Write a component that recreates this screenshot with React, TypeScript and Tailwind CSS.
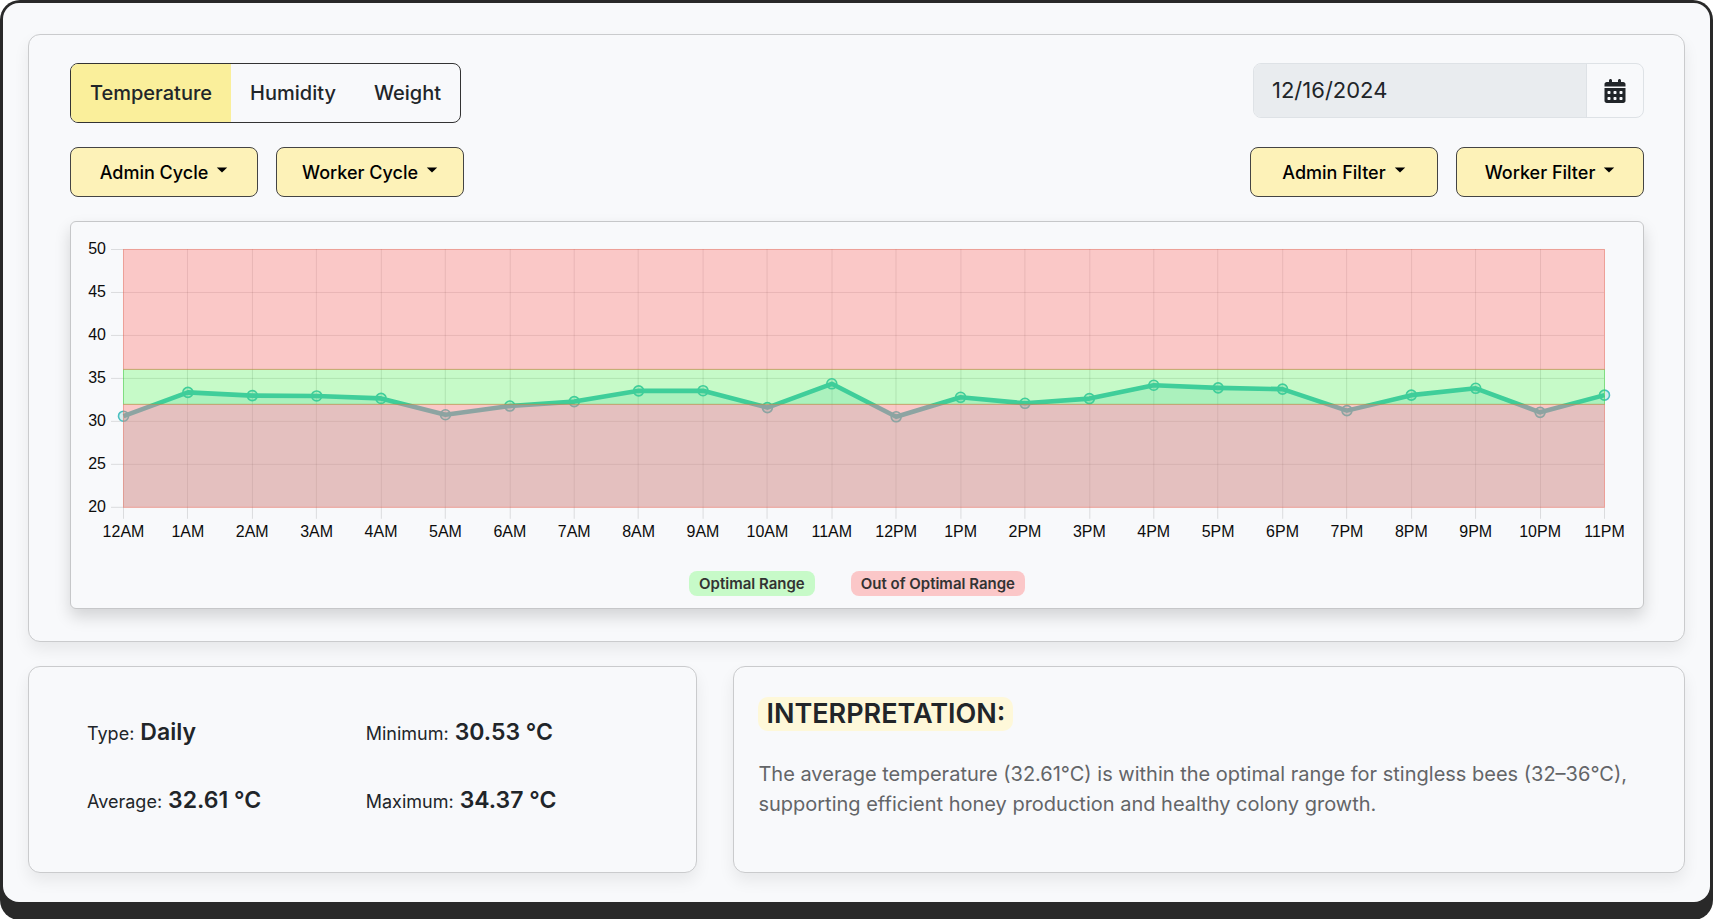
import React, { useState } from "react";
import { FaCalendarDays } from "react-icons/fa6";

const HOURS = [
  "12AM", "1AM", "2AM", "3AM", "4AM", "5AM", "6AM", "7AM", "8AM", "9AM", "10AM", "11AM",
  "12PM", "1PM", "2PM", "3PM", "4PM", "5PM", "6PM", "7PM", "8PM", "9PM", "10PM", "11PM",
];

const READINGS = [
  30.6, 33.37, 33.0, 32.96, 32.67, 30.77, 31.78, 32.3, 33.55, 33.57, 31.6, 34.37,
  30.53, 32.8, 32.1, 32.65, 34.2, 33.9, 33.75, 31.25, 33.05, 33.85, 31.05, 33.05,
];

const Y_TICKS = [50, 45, 40, 35, 30, 25, 20];

// Plot area inside the chart's own coordinate system.
const LEFT = 52;
const RIGHT = 1534;
const TOP = 27;
const BOTTOM = 285;

const xAt = (i: number) => LEFT + ((RIGHT - LEFT) * i) / (HOURS.length - 1);
const yAt = (v: number) => BOTTOM - ((v - 20) / 30) * (BOTTOM - TOP);
const crisp = (n: number) => Math.round(n) + 0.5;

function Band({ from, to, fill, stroke }: { from: number; to: number; fill: string; stroke: string }) {
  return (
    <rect
      x={LEFT + 0.5}
      y={crisp(yAt(to))}
      width={RIGHT - LEFT}
      height={crisp(yAt(from)) - crisp(yAt(to))}
      fill={fill}
      stroke={stroke}
    />
  );
}

function TemperatureChart() {
  const line = READINGS.map((v, i) => `${xAt(i) + 0.5},${yAt(v) + 0.5}`).join(" ");
  return (
    <svg
      viewBox="0 0 1573 325"
      className="block w-full"
      role="img"
      aria-label="Temperature by hour"
    >
      <g stroke="rgba(0,0,0,0.12)">
        {Y_TICKS.map((t) => (
          <line key={t} x1={LEFT - 12} x2={RIGHT} y1={crisp(yAt(t))} y2={crisp(yAt(t))} />
        ))}
        {HOURS.map((h, i) => (
          <line key={h} x1={crisp(xAt(i))} x2={crisp(xAt(i))} y1={TOP} y2={BOTTOM + 12} />
        ))}
      </g>
      <polygon
        points={`${LEFT},${BOTTOM} ${line} ${RIGHT},${BOTTOM}`}
        fill="rgba(75,192,192,0.2)"
      />
      <polyline points={line} fill="none" stroke="rgb(75,192,192)" strokeWidth="4.6" strokeLinejoin="round" />
      {READINGS.map((v, i) => (
        <circle
          key={i}
          cx={xAt(i) + 0.5}
          cy={yAt(v) + 0.5}
          r="5"
          fill="rgba(75,192,192,0.2)"
          stroke="rgb(75,192,192)"
          strokeWidth="1.6"
        />
      ))}
      <Band from={32} to={36} fill="rgba(25,255,16,0.22)" stroke="rgba(60,220,60,0.5)" />
      <Band from={20} to={32} fill="rgba(255,118,112,0.37)" stroke="rgba(255,100,80,0.4)" />
      <Band from={36} to={50} fill="rgba(255,118,112,0.37)" stroke="rgba(255,100,80,0.4)" />
      <g fill="#0c0c0c" fontFamily="'Liberation Sans', Arial, sans-serif" fontSize="16">
        {Y_TICKS.map((t) => (
          <text key={t} x={LEFT - 17} y={yAt(t) + 5} textAnchor="end">{t}</text>
        ))}
        {HOURS.map((h, i) => (
          <text key={h} x={xAt(i) + 0.5} y={BOTTOM + 30} textAnchor="middle">{h}</text>
        ))}
      </g>
    </svg>
  );
}

function MenuButton({ label }: { label: string }) {
  return (
    <button
      type="button"
      aria-haspopup="menu"
      className="flex h-[50px] w-[188px] items-center justify-center gap-2 rounded-lg border border-[#444] bg-[#fdf2b8] text-[18px] font-medium text-black"
    >
      {label}
      <svg className="mb-1" width="12" height="6" viewBox="0 0 12 6" aria-hidden="true">
        <path d="M0.8 0.5h10.4L6 5.6z" fill="currentColor" />
      </svg>
    </button>
  );
}

function Stat({ label, value }: { label: string; value: string }) {
  return (
    <div className="flex items-baseline gap-1.5">
      <dt className="text-[18px]">{label}:</dt>
      <dd className="text-[23px] font-semibold">{value}</dd>
    </div>
  );
}

const CARD = "rounded-xl border border-[#cacbcd] bg-[#f8f9fb] shadow-[0_8px_16px_rgba(0,0,0,0.07)]";

export default function App() {
  const [metric, setMetric] = useState("Temperature");
  return (
    <div className="min-h-screen bg-white font-['Inter',sans-serif] text-[#212529]">
      <main className="min-h-screen rounded-[20px] bg-[#292929] px-[3px] pt-[3px] pb-[18px]">
        <div className="flex flex-col gap-6 rounded-2xl bg-[#f8f9fb] px-[25px] pt-[31px] pb-[29px]">
          <section className={`${CARD} pt-7 pr-10 pb-8 pl-[41px]`}>
            <div className="flex items-start justify-between">
              <div
                role="group"
                aria-label="Metric"
                className="flex h-[60px] overflow-hidden rounded-lg border border-[#333]"
              >
                {["Temperature", "Humidity", "Weight"].map((m) => (
                  <button
                    key={m}
                    type="button"
                    aria-pressed={metric === m}
                    onClick={() => setMetric(m)}
                    className={`px-[19px] text-[20px] font-medium ${metric === m ? "bg-[#faef9b]" : ""}`}
                  >
                    {m}
                  </button>
                ))}
              </div>
              <div className="flex h-[55px] w-[391px] overflow-hidden rounded-lg border border-[#dee2e6]">
                <input
                  type="text"
                  readOnly
                  aria-label="Date"
                  defaultValue="12/16/2024"
                  className="min-w-0 flex-1 border-r border-[#dee2e6] bg-[#e9ecef] px-[18px] text-[22px] outline-none"
                />
                <button type="button" aria-label="Open calendar" className="flex w-14 items-center justify-center">
                  <FaCalendarDays size={24} />
                </button>
              </div>
            </div>

            <div className="mt-6 flex justify-between">
              <div className="flex gap-[18px]">
                <MenuButton label="Admin Cycle" />
                <MenuButton label="Worker Cycle" />
              </div>
              <div className="flex gap-[18px]">
                <MenuButton label="Admin Filter" />
                <MenuButton label="Worker Filter" />
              </div>
            </div>

            <div className="mt-6 rounded-md border border-[#c6c7c9] bg-[#f8f9fb] pb-3 shadow-[0_8px_16px_rgba(0,0,0,0.15)]">
              <TemperatureChart />
              <ul className="mt-6 flex justify-center gap-9 text-[15px] leading-[25px] font-semibold text-[#333]">
                <li className="rounded-lg bg-[#c7fac8] px-2.5">Optimal Range</li>
                <li className="rounded-lg bg-[#fbc7c8] px-2.5">Out of Optimal Range</li>
              </ul>
            </div>
          </section>

          <div className="grid grid-cols-12 gap-9">
            <section className={`${CARD} col-span-5 pt-[47px] pr-[52px] pb-[52px] pl-[58px]`}>
              <dl className="grid grid-cols-2 gap-y-[30px] leading-9">
                <Stat label="Type" value="Daily" />
                <Stat label="Minimum" value="30.53 °C" />
                <Stat label="Average" value="32.61 °C" />
                <Stat label="Maximum" value="34.37 °C" />
              </dl>
            </section>
            <section className={`${CARD} col-span-7 px-6 pt-[30px]`}>
              <h2 className="w-fit rounded-[10px] bg-[#fef8d9] px-2 text-[27px] leading-[34px] font-semibold">
                INTERPRETATION:
              </h2>
              <p className="mt-7 text-[20px] leading-[30px] text-[#636568]">
                The average temperature (32.61°C) is within the optimal range for stingless bees (32–36°C),
                supporting efficient honey production and healthy colony growth.
              </p>
            </section>
          </div>
        </div>
      </main>
    </div>
  );
}
